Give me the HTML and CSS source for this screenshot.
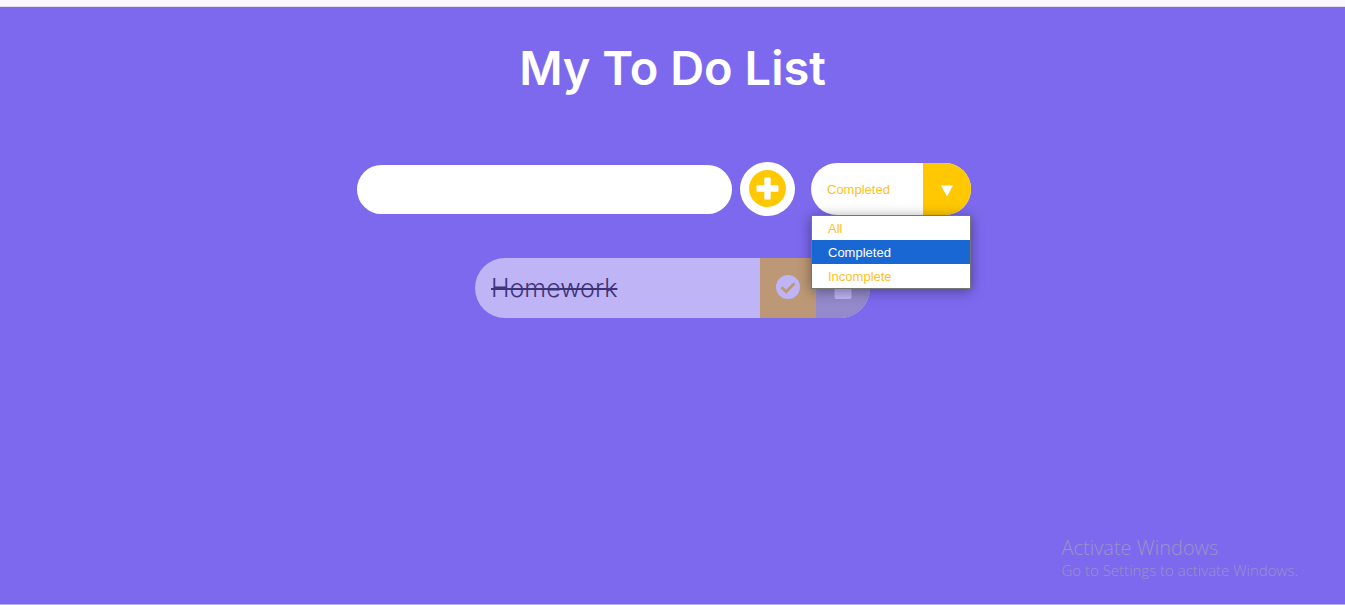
FILE: index.html
```html
<!DOCTYPE html>
<html lang="en">
<head>
<meta charset="utf-8">
<meta name="viewport" content="width=device-width, initial-scale=1">
<title>My To Do List</title>
<link rel="stylesheet" href="styles.css">
</head>
<body>
<div class="topbar"></div>
<header class="header">
  <h1 class="title">My To Do List</h1>
</header>
<main>
  <form class="form">
    <input class="todo-input" type="text" aria-label="New to do">
    <button class="add-button" type="button" aria-label="Add">
      <svg class="add-icon" viewBox="0 0 38 38" aria-hidden="true"><circle cx="18.500" cy="18.500" r="18.500" fill="#ffc802"/><path fill="#fff" d="M16.300 7.500h4.400q1 0 1 1v6.800h6.800q1 0 1 1v4.400q0 1-1 1h-6.800v6.800q0 1-1 1h-4.400q-1 0-1-1v-6.800h-6.800q-1 0-1-1v-4.400q0-1 1-1h6.800v-6.800q0-1 1-1z"/></svg>
    </button>
    <div class="select">
      <select class="filter" aria-label="Filter">
        <option>All</option>
        <option selected>Completed</option>
        <option>Incomplete</option>
      </select>
      <span class="arrow"><svg class="arrow-icon" viewBox="0 0 12 12" aria-hidden="true"><path fill="#fff" d="M0 .5h12L6 11.500z"/></svg></span>
      <ul class="menu" role="listbox" aria-label="Filter options">
        <li class="menu-item" role="option">All</li>
        <li class="menu-item menu-item-active" role="option" aria-selected="true">Completed</li>
        <li class="menu-item" role="option">Incomplete</li>
      </ul>
    </div>
  </form>
  <ul class="todo-list">
    <li class="todo">
      <span class="todo-text">Homework</span>
      <button class="todo-button complete" type="button" aria-label="Complete">
        <svg class="todo-icon" viewBox="0 0 24 24" aria-hidden="true"><circle cx="12" cy="12" r="12" fill="#fff"/><path d="M5.500 12.200l4.600 4.500 8.400-8.400" fill="none" stroke="#fbc800" stroke-width="2.800"/></svg>
      </button>
      <button class="todo-button trash" type="button" aria-label="Delete">
        <svg class="todo-icon" viewBox="0 0 24 24" aria-hidden="true"><path fill="#fff" d="M2.500 1.500h5l1-1.500h6l1 1.500h5v3h-18zM3.500 6h17v16q0 2-2 2h-13q-2 0-2-2z"/></svg>
      </button>
    </li>
  </ul>
</main>
<aside class="watermark">
  <p class="watermark-title">Activate Windows</p>
  <p class="watermark-text">Go to Settings to activate Windows.</p>
</aside>
</body>
</html>
```
FILE: styles.css
```css
* {
  margin: 0;
  padding: 0;
  box-sizing: border-box;
}

body {
  min-height: 100vh;
  border-bottom: 1px solid #b9aef5;
  background: #7d69ee;
  color: #fff;
  font-family: Inter, sans-serif;
}

.topbar {
  height: 7px;
  background: #fcf8ff;
  border-bottom: 1px solid #e2dfe6;
}

.header {
  padding: 32px 16px;
  text-align: center;
}

.title {
  font-size: 47px;
  font-weight: 600;
  line-height: 58px;
}

.form {
  display: flex;
  justify-content: center;
  align-items: center;
  padding: 33px 17px 0 0;
}

.todo-input {
  width: 375px;
  height: 49px;
  padding: 8px 24px;
  border: 0;
  border-radius: 25px;
  background: #fff;
  font-size: 24px;
}

.add-button {
  display: flex;
  justify-content: center;
  align-items: center;
  width: 55px;
  height: 54px;
  margin: 0 16px 0 8px;
  border: 0;
  border-radius: 50%;
  background: #fff;
}

.add-icon {
  width: 38px;
  height: 38px;
}

.select {
  position: relative;
  display: flex;
  width: 160px;
  height: 52px;
}

.filter {
  appearance: none;
  width: 100%;
  padding: 0 64px 0 16px;
  border: 0;
  border-radius: 26px;
  background: #fff;
  color: #ffc01e;
  font: 13px "Liberation Sans", Arial, sans-serif;
}

.arrow {
  position: absolute;
  top: 0;
  right: 0;
  bottom: 0;
  display: flex;
  justify-content: center;
  align-items: center;
  width: 48px;
  padding-top: 4px;
  border-radius: 0 26px 26px 0;
  background: #ffc802;
  pointer-events: none;
}

.arrow-icon {
  width: 12px;
  height: 12px;
}

.menu {
  position: absolute;
  z-index: 1;
  top: 100%;
  left: 0;
  width: 100%;
  border: 1px solid #767676;
  background: #fff;
  box-shadow: 0 2px 12px rgba(0, 0, 0, 0.4);
  list-style: none;
}

.menu-item {
  height: 24px;
  padding: 0 16px;
  color: #ffc01e;
  font: 13px/26px "Liberation Sans", Arial, sans-serif;
}

.menu-item-active {
  background: #1967d2;
  color: #fff;
}

.todo-list {
  display: flex;
  justify-content: center;
  padding-top: 42px;
  list-style: none;
}

.todo {
  display: flex;
  height: 60px;
  overflow: hidden;
  border-radius: 30px;
  background: #fff;
  color: #000;
  opacity: 0.5;
}

.todo-text {
  width: 285px;
  padding-left: 16px;
  font-size: 25px;
  font-weight: 300;
  line-height: 60px;
  text-decoration: line-through;
}

.todo-button {
  display: flex;
  justify-content: center;
  align-items: center;
  padding-bottom: 2px;
  border: 0;
}

.complete {
  width: 56px;
  background: #fbc800;
}

.trash {
  width: 54px;
  background: #aaa;
}

.todo-icon {
  width: 24px;
  height: 24px;
}

.watermark {
  position: absolute;
  right: 47px;
  bottom: 25px;
  color: #9b92c6;
  font-family: "Open Sans", sans-serif;
  font-weight: 300;
}

.watermark-title {
  font-size: 20px;
  line-height: 24px;
}

.watermark-text {
  font-size: 15px;
  line-height: 20px;
}
```
